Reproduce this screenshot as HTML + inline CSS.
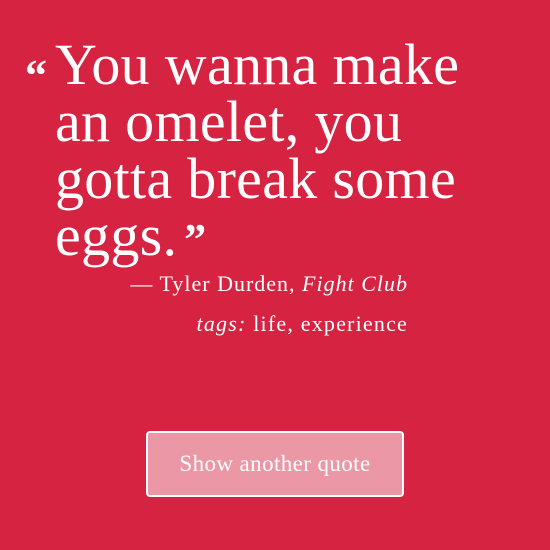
<!DOCTYPE html>
<html><head><style>
html,body{margin:0;padding:0;width:550px;height:550px;background:#d52341;overflow:hidden}
body{font-family:"Liberation Serif",serif;color:#fff;position:relative}
.q{position:absolute;left:55px;top:36px;font-size:58px;line-height:57px;white-space:nowrap;letter-spacing:.3px}
.lq{position:absolute;left:25px;top:56px;font-size:44px;line-height:40px;font-weight:bold}
.rq{font-size:44px;vertical-align:top;position:relative;top:4px;font-weight:bold;margin-left:-8px}
.a{position:absolute;right:142px;top:271px;font-size:22px;letter-spacing:1px}
.t{position:absolute;right:142px;top:311px;font-size:22px;letter-spacing:1.2px}
.btn{position:absolute;left:146px;top:431px;width:254px;height:62px;border:2px solid #fff;border-radius:4px;background:#eb97a5;font-size:23px;letter-spacing:.4px;text-align:center;line-height:62px}
</style></head><body>
<div class="lq">“</div>
<div class="q">You wanna make<br>an omelet, you<br>gotta break some<br>eggs. <span class="rq">”</span></div>
<div class="a">— Tyler Durden, <i>Fight Club</i></div>
<div class="t"><i>tags:</i> life, experience</div>
<div class="btn">Show another quote</div>
</body></html>
